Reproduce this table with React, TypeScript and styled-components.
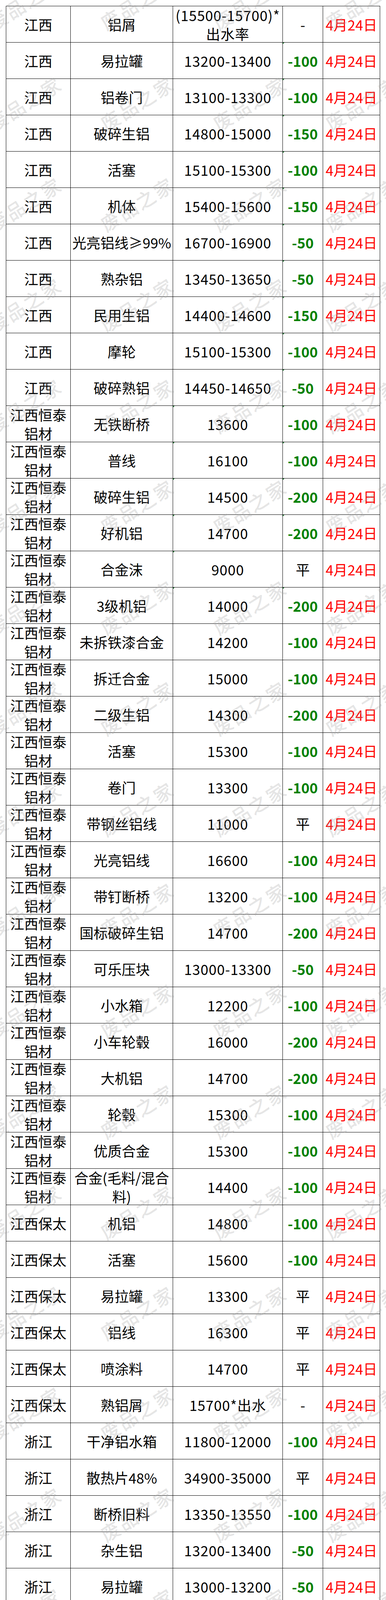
import React from 'react'
import styled, { createGlobalStyle, css } from 'styled-components'

const GlobalStyle = createGlobalStyle`
  html, body {
    margin: 0;
    padding: 0;
    background: #fff;
  }
  body {
    font-family: "Noto Sans CJK SC", "Noto Sans", sans-serif;
  }
`

const Page = styled.div`
  position: relative;
  width: 988px;
  height: 7750px;
  padding: 15px 0 0 15px;
  box-sizing: border-box;
  overflow: hidden;
  background: #fff;
`

const Table = styled.div`
  display: grid;
  grid-template-columns: 165px 262px 281px 103px 146px;
  grid-auto-rows: 93px;
  width: 958px;
  box-sizing: border-box;
  border-top: 1px solid #000;
  border-left: 1px solid #000;
`

const Cell = styled.div<{ $tick?: boolean }>`
  position: relative;
  display: flex;
  align-items: center;
  justify-content: center;
  box-sizing: border-box;
  padding: 0 2px;
  border-right: 1px solid #000;
  border-bottom: 1px solid #000;
  text-align: center;
  font-size: 36px;
  line-height: 48px;
  color: #000;
  ${p => p.$tick && css`
    &::before {
      content: '';
      position: absolute;
      left: 0;
      top: 0;
      border-top: 4px solid #1d7d32;
      border-right: 4px solid transparent;
    }
  `}
`

const RegionCell = styled(Cell)``

const ProductCell = styled(Cell)``

const PriceCell = styled(Cell)<{ $stop?: boolean }>`
  letter-spacing: 1px;
  ${p => p.$stop && css`
    color: #ff0000;
    font-weight: 700;
    letter-spacing: 0;
  `}
`

const ChangeCell = styled(Cell)<{ $down?: boolean }>`
  ${p => p.$down && css`
    color: #008000;
    font-weight: 700;
  `}
`

const DateCell = styled(Cell)`
  color: #ff0000;
`

// 水印层叠在表格上方
const WatermarkLayer = styled.div`
  position: absolute;
  left: -81px;
  top: -124px;
  display: grid;
  grid-template-columns: repeat(5, 288px);
  grid-auto-rows: 258px;
  pointer-events: none;
`

const Mark = styled.div`
  display: flex;
  align-items: center;
  justify-content: center;
  white-space: nowrap;
  font-size: 48px;
  letter-spacing: 5px;
  color: rgba(170, 170, 170, 0.28);
  -webkit-text-stroke: 0.6px rgba(120, 120, 120, 0.22);
  transform: rotate(-32deg);
`

// [地区, 品名, 价格, 涨跌, 价格角标, 涨跌角标]
type Row = [string, string, string, string, boolean?, boolean?]

const JX = '江西'
const HT = '江西恒泰铝材'
const BT = '江西保太'
const ZJ = '浙江'
const TZ = '台州巨东铝业'
const FJ = '福建'
const WR = '*出水率'
const STOP = '暂停收'

const rows: Row[] = [
  [JX, '铝屑', '(15500-15700)*出水率', '-'],
  [JX, '易拉罐', '13200-13400', '-100', false, true],
  [JX, '铝卷门', '13100-13300', '-100', false, true],
  [JX, '破碎生铝', '14800-15000', '-150', false, true],
  [JX, '活塞', '15100-15300', '-100', false, true],
  [JX, '机体', '15400-15600', '-150', false, true],
  [JX, '光亮铝线≥99%', '16700-16900', '-50', false, true],
  [JX, '熟杂铝', '13450-13650', '-50', false, true],
  [JX, '民用生铝', '14400-14600', '-150', false, true],
  [JX, '摩轮', '15100-15300', '-100', false, true],
  [JX, '破碎熟铝', '14450-14650', '-50', false, true],
  [HT, '无铁断桥', '13600', '-100', true, true],
  [HT, '普线', '16100', '-100', true, true],
  [HT, '破碎生铝', '14500', '-200', true, true],
  [HT, '好机铝', '14700', '-200', true, true],
  [HT, '合金沫', '9000', '平', true],
  [HT, '3级机铝', '14000', '-200', true, true],
  [HT, '未拆铁漆合金', '14200', '-100'],
  [HT, '拆迁合金', '15000', '-100'],
  [HT, '二级生铝', '14300', '-200'],
  [HT, '活塞', '15300', '-100'],
  [HT, '卷门', '13300', '-100'],
  [HT, '带钢丝铝线', '11000', '平'],
  [HT, '光亮铝线', '16600', '-100'],
  [HT, '带钉断桥', '13200', '-100'],
  [HT, '国标破碎生铝', '14700', '-200'],
  [HT, '可乐压块', '13000-13300', '-50'],
  [HT, '小水箱', '12200', '-100'],
  [HT, '小车轮毂', '16000', '-200'],
  [HT, '大机铝', '14700', '-200'],
  [HT, '轮毂', '15300', '-100'],
  [HT, '优质合金', '15300', '-100'],
  [HT, '合金(毛料/混合料)', '14400', '-100'],
  [BT, '机铝', '14800', '-100'],
  [BT, '活塞', '15600', '-100'],
  [BT, '易拉罐', '13300', '平'],
  [BT, '铝线', '16300', '平'],
  [BT, '喷涂料', '14700', '平'],
  [BT, '熟铝屑', '15700*出水', '-'],
  [ZJ, '干净铝水箱', '11800-12000', '-100'],
  [ZJ, '散热片48%', '34900-35000', '平'],
  [ZJ, '断桥旧料', '13350-13550', '-100'],
  [ZJ, '杂生铝', '13200-13400', '-50'],
  [ZJ, '易拉罐', '13000-13200', '-50'],
  [ZJ, '6系铝刨花9成', '13900-14100', '-50'],
  [ZJ, '水箱铝复锭', '16700-16900', '-100'],
  [ZJ, '铝圈', '15100-15300', '平'],
  [ZJ, '铝合金旧白料', '15250-15450', '-100'],
  [ZJ, '一级生铝', '14550-14750', '-100'],
  [ZJ, '光亮铝线≥99%', '16600-16900', '平'],
  [ZJ, '拆水箱铝89%', '14200-14400', '-100'],
  [ZJ, '6系铝屑8.8', '13700-13900', '-50'],
  [ZJ, '汽车水箱', '11800-12000', '-100'],
  [ZJ, '拆迁喷涂料干净', '14550-14750', '-100'],
  [TZ, '易拉罐', '16300' + WR, '-'],
  [TZ, '拆迁白料合金', '17200' + WR, '-'],
  [TZ, '新断桥合金', STOP, '-'],
  [TZ, '水箱铝皮', '16800' + WR, '-'],
  [TZ, '一级生铝', '16800' + WR, '-'],
  [TZ, '生铝', '16600' + WR, '-'],
  [TZ, '毛料拆迁合金', STOP, '-'],
  [TZ, '毛料旧断桥', STOP, '-'],
  [TZ, '电机黄丝', '17300' + WR, '-'],
  [TZ, '铝刨花', '16000' + WR, '-'],
  [TZ, '浮头渣', '15600' + WR, '-'],
  [TZ, '纯白合金', STOP, '-'],
  [TZ, '国标生铝', '17000' + WR, '-'],
  [TZ, '角料合金', STOP, '-'],
  [TZ, '新油漆料', STOP, '-'],
  [TZ, '杂生铝', STOP, '-'],
  [TZ, '汽车统货机铝', STOP, '-'],
  [TZ, '混合合金', '16100' + WR, '-'],
  [TZ, '光亮铝丝', '19100' + WR, '-'],
  [TZ, '汽车小水箱', '16800' + WR, '-'],
  [FJ, '摩轮', '15100-15300', '-50'],
  [FJ, '活塞', '15100-15300', '-50'],
  [FJ, '拆迁喷涂料', '14550-14750', '-100', false, true],
  [FJ, '油件机铝', '(16000-16200)*出水率', '-'],
  [FJ, '汽车轮毂', '16000-16200', '-50', false, true],
  [FJ, '易拉罐', '13300-13500', '-100', false, true],
  [FJ, '大水箱', '13000-13200', '平'],
  [FJ, '机铝', '14400-14600', '-50', false, true],
  [FJ, '光亮铝线≥99%', '16700-16900', '-50', false, true],
]

const DATE = '4月24日'

class PriceTable extends React.Component {
  render() {
    return (
      <Table>
        {
          rows.map(([region, product, price, change, tickPrice, tickChange], index) => (
            <React.Fragment key={index}>
              <RegionCell>{region}</RegionCell>
              <ProductCell>{product}</ProductCell>
              <PriceCell $stop={price === STOP} $tick={tickPrice}>{price}</PriceCell>
              <ChangeCell $down={change.startsWith('-') && change.length > 1} $tick={tickChange}>{change}</ChangeCell>
              <DateCell>{DATE}</DateCell>
            </React.Fragment>
          ))
        }
      </Table>
    )
  }
}

const Watermarks = () => {
  const cells = Array.from({ length: 5 * 31 })
  return (
    <WatermarkLayer>
      {cells.map((_, i) => <Mark key={i}>废品之家</Mark>)}
    </WatermarkLayer>
  )
}

export default function App() {
  return (
    <>
      <GlobalStyle />
      <Page>
        <PriceTable />
        <Watermarks />
      </Page>
    </>
  )
}
